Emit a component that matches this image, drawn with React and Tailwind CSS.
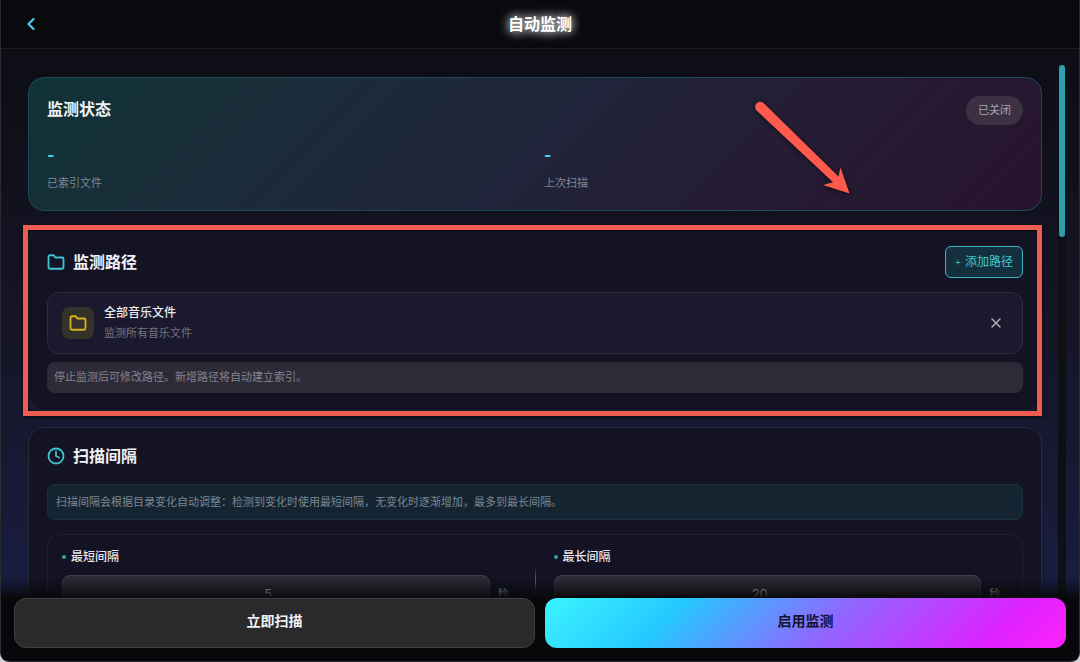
import { useState } from "react";
import { FiChevronLeft, FiClock, FiFolder, FiX } from "react-icons/fi";

const stats = [
  { label: "已索引文件", value: "-" },
  { label: "上次扫描", value: "-" },
];

function SectionTitle({ icon: Icon, children }) {
  return (
    <h2 className="flex items-center gap-2 text-base leading-5 font-semibold text-[#f1f1f6]">
      <Icon className="size-[18px] text-[#3cc5d0]" strokeWidth={2.4} aria-hidden />
      {children}
    </h2>
  );
}

function StatusCard() {
  return (
    <section className="rounded-2xl border border-[#1c4a57] bg-linear-135 from-[#0f3337] via-[#20243a] to-[#28122d] p-[18px]">
      <div className="flex items-start justify-between">
        <h2 className="text-base leading-[26px] font-semibold text-[#f1f1f6]">监测状态</h2>
        <span className="rounded-full bg-[#3b3143] px-3 py-1.5 text-[11px] leading-[17px] text-[#a9a3af]">
          已关闭
        </span>
      </div>
      <dl className="mt-[18px] grid grid-cols-2 gap-[18px]">
        {stats.map((stat) => (
          <div key={stat.label} className="flex flex-col-reverse gap-[7px]">
            <dt className="text-[11px] leading-[18px] text-[#7f8894]">{stat.label}</dt>
            <dd className="text-base leading-6 font-bold text-[#45d8e6]">{stat.value}</dd>
          </div>
        ))}
      </dl>
    </section>
  );
}

function PathCard() {
  return (
    <div className="relative">
      <section className="rounded-2xl border border-[#262637] bg-[#141323] px-[18px] pt-[18px] pb-[17px]">
        <div className="flex h-8 items-center justify-between">
          <SectionTitle icon={FiFolder}>监测路径</SectionTitle>
          <button
            type="button"
            className="flex items-center gap-1 rounded-md border border-[#3cb5c0] bg-[#14303f] px-[9px] py-1.5 text-xs leading-[18px] text-[#3fc9cf]"
          >
            <span className="text-[9px]">+</span>
            添加路径
          </button>
        </div>

        <ul className="mt-3.5">
          <li className="flex items-center gap-2.5 rounded-xl border border-[#2e2c40] bg-[#1b192d] px-3.5 py-3">
            <span className="flex size-8 items-center justify-center rounded-lg bg-[#343329]">
              <FiFolder className="size-[18px] text-[#dfb01f]" strokeWidth={2.4} aria-hidden />
            </span>
            <div className="flex flex-1 flex-col gap-1">
              <p className="text-xs leading-4 font-medium text-[#e9e9f0]">全部音乐文件</p>
              <p className="text-[11px] leading-4 text-[#777584]">监测所有音乐文件</p>
            </div>
            <button
              type="button"
              aria-label="移除"
              className="flex size-6 items-center justify-center text-[#b3b1bd]"
            >
              <FiX className="size-4" aria-hidden />
            </button>
          </li>
        </ul>

        <p className="mt-2 rounded-lg bg-[#2d2b38] px-[7px] py-[7px] text-[11px] leading-[17px] text-[#85838f]">
          停止监测后可修改路径。新增路径将自动建立索引。
        </p>
      </section>

      {/* highlight frame */}
      <div
        className="pointer-events-none absolute -top-0.5 right-0 -bottom-[5px] -left-[5px] border-[5px] border-[#ef5c52] shadow-[0_1px_3px_rgba(0,0,0,0.7),inset_0_1px_3px_rgba(0,0,0,0.7)]"
        aria-hidden
      />
    </div>
  );
}

function IntervalField({ id, label, value, onChange }) {
  return (
    <div className="flex flex-col gap-2.5">
      <label
        htmlFor={id}
        className="flex items-center gap-[5px] text-xs leading-4 font-medium text-[#e9e9f0]"
      >
        <span className="size-1 rounded-full bg-[#2fa3a5]" />
        {label}
      </label>
      <div className="flex items-center gap-2">
        <input
          id={id}
          type="number"
          value={value}
          onChange={(e) => onChange(e.target.value)}
          className="h-[38px] min-w-0 flex-1 rounded-lg border border-[#403e4b] bg-[#2d2b38] text-center text-[13px] text-[#e2e1e8]"
        />
        <span className="w-[19px] text-[11px] text-[#c3c1cc]">秒</span>
      </div>
    </div>
  );
}

function IntervalCard() {
  const [min, setMin] = useState("5");
  const [max, setMax] = useState("20");

  return (
    <section className="rounded-2xl border border-[#2a2a3a] bg-[#141323] p-[18px]">
      <SectionTitle icon={FiClock}>扫描间隔</SectionTitle>
      <p className="mt-[18px] rounded-lg border border-[#163440] bg-[#142431] px-2 py-2 text-[11px] leading-[18px] text-[#7d8791]">
        扫描间隔会根据目录变化自动调整：检测到变化时使用最短间隔，无变化时逐渐增加，最多到最长间隔。
      </p>
      <div className="mt-3.5 grid grid-cols-[1fr_1px_1fr] gap-x-[18px] rounded-xl border border-[#201f2f] p-3.5">
        <IntervalField id="min-interval" label="最短间隔" value={min} onChange={setMin} />
        <div className="h-8 self-center bg-linear-to-b from-transparent via-[#1f7f88] to-transparent" />
        <IntervalField id="max-interval" label="最长间隔" value={max} onChange={setMax} />
      </div>
    </section>
  );
}

// pointer drawn on top of the status card
function Arrow() {
  return (
    <svg
      className="pointer-events-none absolute top-[51px] left-[753px] h-[104px] w-[106px] drop-shadow-[0_1px_2px_rgba(0,0,0,0.6)]"
      viewBox="754 100 106 104"
      aria-hidden
    >
      <path
        d="M764 103.5 L838.5 176.5 L840.5 167.5 L849.5 193.5 L823 185 L833 182.3 L756.5 110.5 A5 5 0 0 1 764 103.5 Z"
        fill="#ff5a4c"
      />
    </svg>
  );
}

export default function App() {
  return (
    <div className="bg-[#d4d4da]">
      <div
        lang="zh-CN"
        className="relative flex h-screen flex-col overflow-hidden rounded-b-[9px] border-x border-b border-[#2b2b33] bg-linear-to-b from-[#0c0c12] via-[#161527] via-50% to-[#181f46] font-['Inter','Noto_Sans_CJK_SC',sans-serif]"
      >
        <header className="grid shrink-0 grid-cols-[1fr_auto_1fr] items-center border-b border-[#1d1d22] bg-[#090a0d] px-[18px] py-3">
          <button
            type="button"
            aria-label="返回"
            className="flex size-6 items-center justify-center text-[#43cbdc]"
          >
            <FiChevronLeft className="size-5" strokeWidth={2.8} aria-hidden />
          </button>
          <h1 className="text-base leading-6 font-semibold text-white [text-shadow:0_0_12px_rgba(255,255,255,0.8),0_0_8px_rgba(255,255,255,0.7)]">
            自动监测
          </h1>
        </header>

        <div className="relative flex min-h-0 flex-1 px-[13px] pt-4">
          <main className="flex min-w-0 flex-1 flex-col gap-4 overflow-hidden pt-3 pr-4 pl-3.5">
            <StatusCard />
            <PathCard />
            <IntervalCard />
          </main>
          <div className="w-2 bg-[#0f1016] px-px" aria-hidden>
            <div className="h-[172px] rounded-full bg-[#2b9fac]" />
          </div>
          <Arrow />
        </div>

        <footer className="absolute inset-x-0 bottom-0 grid grid-cols-2 gap-2.5 bg-linear-to-t from-[#08080b] from-75% to-transparent px-[13px] pt-5 pb-[13px]">
          <button
            type="button"
            className="h-[50px] rounded-xl border border-[#404044] bg-[#2a2a2c] pb-1 text-sm font-semibold text-[#f1f1f4]"
          >
            立即扫描
          </button>
          <button
            type="button"
            className="h-[50px] rounded-xl bg-[linear-gradient(135deg,#3cf4ff_0%,#25c8ff_25%,#9166ff_55%,#dd22ff_85%,#ff22fb_100%)] pb-1 text-sm font-semibold text-[#14122b]"
          >
            启用监测
          </button>
        </footer>
      </div>
    </div>
  );
}
